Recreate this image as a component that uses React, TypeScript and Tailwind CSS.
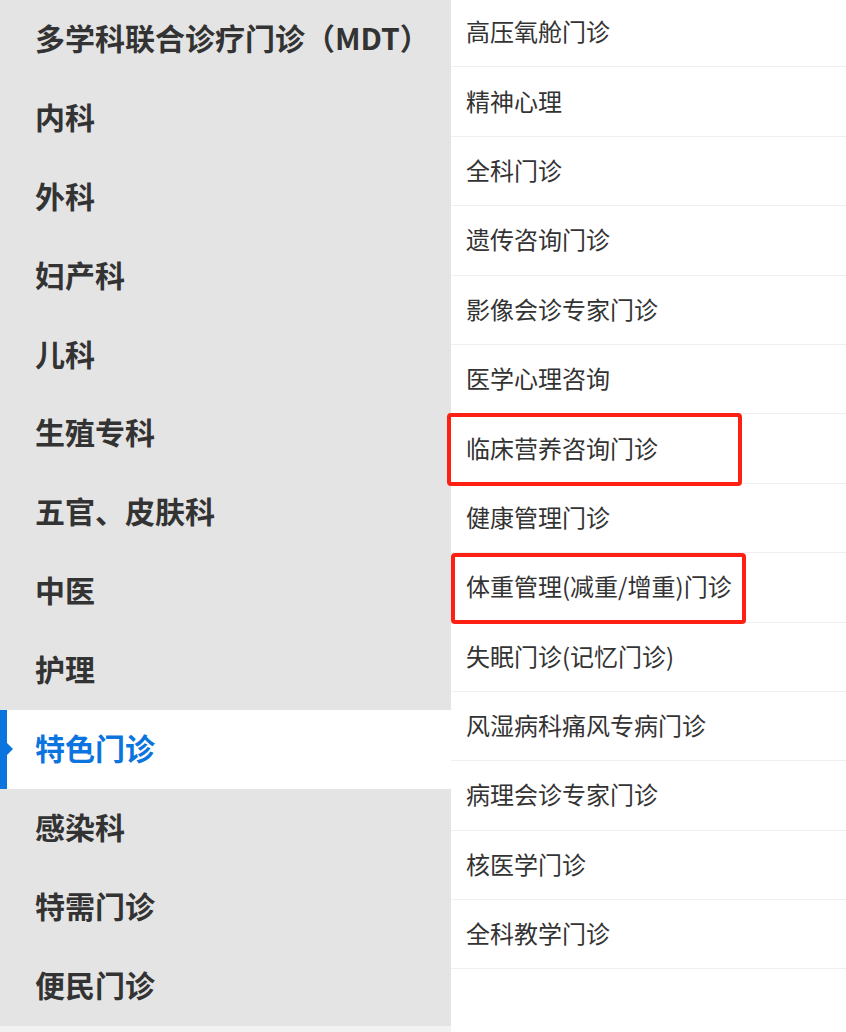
import React from 'react';

const leftItems = [
  '多学科联合诊疗门诊（MDT）',
  '内科',
  '外科',
  '妇产科',
  '儿科',
  '生殖专科',
  '五官、皮肤科',
  '中医',
  '护理',
  '特色门诊',
  '感染科',
  '特需门诊',
  '便民门诊',
];

const rightItems = [
  '高压氧舱门诊',
  '精神心理',
  '全科门诊',
  '遗传咨询门诊',
  '影像会诊专家门诊',
  '医学心理咨询',
  '临床营养咨询门诊',
  '健康管理门诊',
  '体重管理(减重/增重)门诊',
  '失眠门诊(记忆门诊)',
  '风湿病科痛风专病门诊',
  '病理会诊专家门诊',
  '核医学门诊',
  '全科教学门诊',
];

const App = () => {
  const active = '特色门诊';

  return (
    <div
      className="flex w-[846px] h-[1032px] overflow-hidden bg-white"
      style={{ fontFamily: '"Noto Sans CJK SC", "Noto Sans", sans-serif' }}
    >
      {/* Category column */}
      <div className="w-[451px] shrink-0 bg-[#f2f2f2]">
        <ul className="bg-[#e4e4e4]">
          {leftItems.map((name) => {
            const isActive = name === active;
            return (
              <li
                key={name}
                className={`relative flex items-center h-[78.9px] pl-[35px] pb-[5px] text-[30px] font-bold leading-none ${
                  isActive ? 'bg-white text-[#0b74de]' : 'text-[#333333]'
                }`}
              >
                {isActive && (
                  <>
                    <span className="absolute left-0 top-0 h-full w-[7px] bg-[#0b74de]" />
                    <span className="absolute left-[7px] top-1/2 -translate-y-1/2 w-0 h-0 border-y-[6px] border-y-transparent border-l-[6px] border-l-[#0b74de]" />
                  </>
                )}
                {name}
              </li>
            );
          })}
        </ul>
      </div>

      {/* Clinic list */}
      <div className="relative flex-1 bg-white">
        <ul className="-mt-[2px]">
          {rightItems.map((name) => (
            <li
              key={name}
              className="flex items-center h-[69.4px] pl-[15px] pb-[2px] border-b border-[#efefef] text-[24px] text-[#333333] leading-none"
            >
              {name}
            </li>
          ))}
        </ul>

        {/* annotation boxes */}
        <div className="absolute left-[-4px] top-[413px] w-[295px] h-[73px] border-4 border-[#ff2014] rounded-[4px]" />
        <div className="absolute left-[0px] top-[553px] w-[295px] h-[71px] border-4 border-[#ff2014] rounded-[4px]" />
      </div>
    </div>
  );
};

export default App;
